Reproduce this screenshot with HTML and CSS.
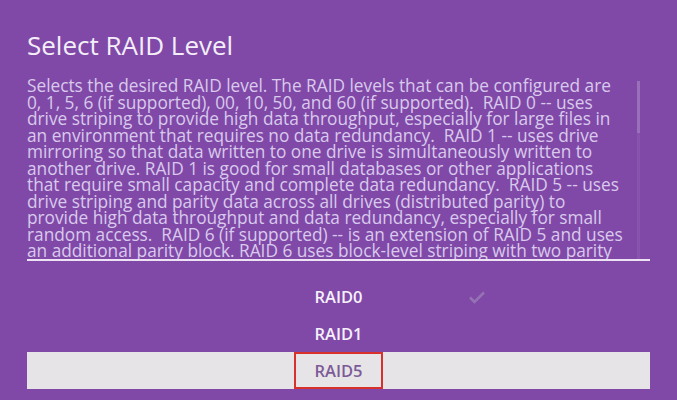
FILE: index.html
```html
<!DOCTYPE html>
<html>
<head>
<meta charset="utf-8">
<link rel="stylesheet" href="styles.css">
</head>
<body>
<div class="dialog">
  <h1 class="title">Select RAID Level</h1>
  <div class="desc-wrap">
    <p class="desc">Selects the desired RAID level. The RAID levels that can be configured are<br>
0, 1, 5, 6 (if supported), 00, 10, 50, and 60 (if supported).&nbsp; RAID 0 -- uses<br>
drive striping to provide high data throughput, especially for large files in<br>
an environment that requires no data redundancy.&nbsp; RAID 1 -- uses drive<br>
mirroring so that data written to one drive is simultaneously written to<br>
another drive. RAID 1 is good for small databases or other applications<br>
that require small capacity and complete data redundancy.&nbsp; RAID 5 -- uses<br>
drive striping and parity data across all drives (distributed parity) to<br>
provide high data throughput and data redundancy, especially for small<br>
random access.&nbsp; RAID 6 (if supported) -- is an extension of RAID 5 and uses<br>
an additional parity block. RAID 6 uses block-level striping with two parity<br>
blocks distributed across all member disks.</p>
    <div class="scrollbar"><div class="thumb"></div></div>
  </div>
  <ul class="options">
    <li class="opt"><span class="label">RAID0</span><span class="check">
      <svg width="18" height="14" viewBox="0 0 18 14"><path d="M2 7.5 L6.5 12 L16 2.5" fill="none" stroke="#9572b3" stroke-width="2.6"/></svg>
    </span></li>
    <li class="opt"><span class="label">RAID1</span></li>
    <li class="opt selected"><span class="label boxed">RAID5</span></li>
    <li class="opt"><span class="label">RAID6</span></li>
  </ul>
</div>
</body>
</html>
```

FILE: styles.css
```css
html, body {
  margin: 0;
  padding: 0;
  height: 100%;
  overflow: hidden;
  background: #8049a8;
}
.dialog {
  padding: 0 27px;
  font-family: "Open Sans", "Noto Sans", sans-serif;
}
.title {
  margin: 0;
  padding-top: 30px;
  font-size: 26px;
  font-weight: 500;
  line-height: 30px;
  color: #f4eef9;
}
.desc-wrap {
  position: relative;
  margin-top: 18px;
  height: 181px;
  border-bottom: 2px solid #ece2f3;
  overflow: hidden;
}
.desc {
  margin: 0;
  white-space: nowrap;
  font-size: 17.25px;
  line-height: 16.5px;
  color: #d9c9ec;
}
.scrollbar {
  position: absolute;
  right: 10px;
  top: 3px;
  bottom: 0;
  width: 3px;
  background: #8753ad;
}
.thumb {
  height: 52px;
  background: #9b70bb;
}
.options {
  list-style: none;
  margin: 17px 0 0;
  padding: 0;
}
.opt {
  position: relative;
  height: 37px;
  display: flex;
  align-items: center;
  justify-content: center;
  font-size: 16.5px;
  font-weight: 600;
  color: #f6f0fa;
}
.opt.selected {
  background: #e6e4e6;
  color: #7c5a98;
}
.label {
  padding: 0 18px;
}
.boxed {
  border: 2px solid #d8312c;
  box-sizing: border-box;
  height: 37px;
  line-height: 33px;
}
.check {
  position: absolute;
  left: 441px;
  top: 8px;
}
```
